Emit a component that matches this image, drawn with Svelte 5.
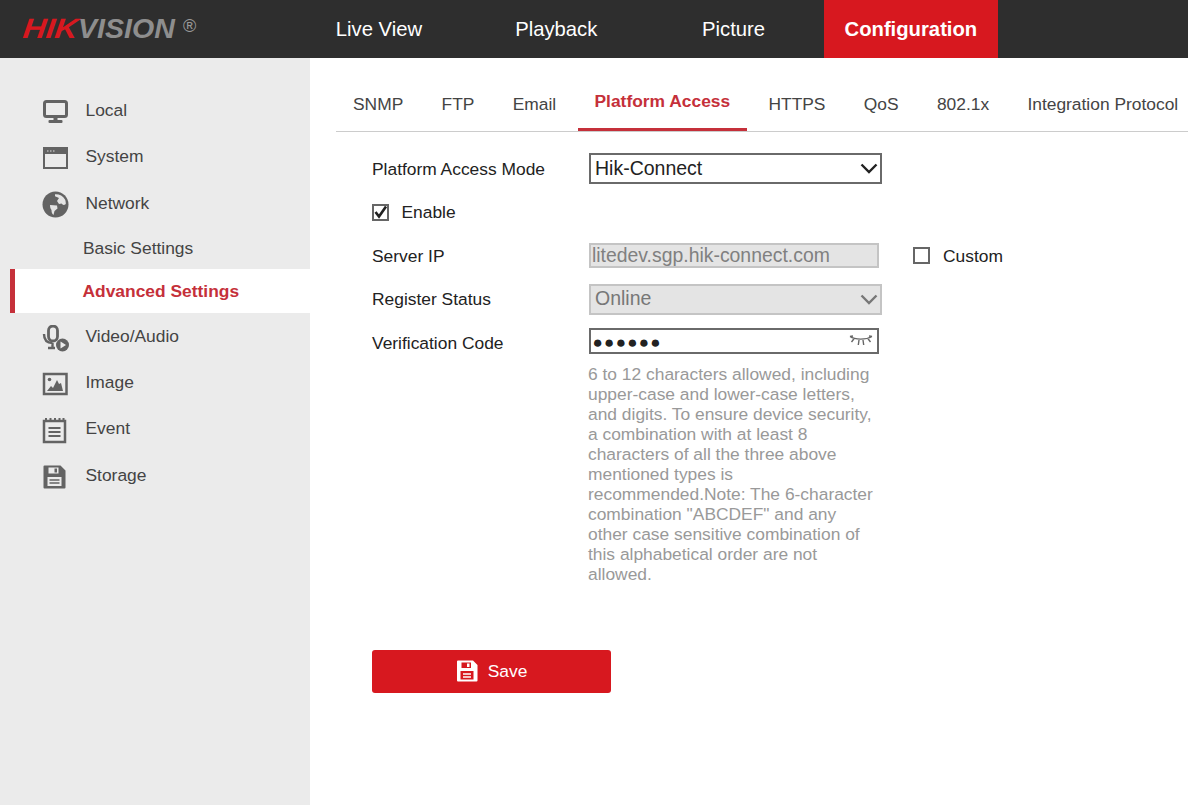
<script>
  const navItems = ['Live View', 'Playback', 'Picture', 'Configuration'];
  const tabs = ['SNMP', 'FTP', 'Email', 'Platform Access', 'HTTPS', 'QoS', '802.1x', 'Integration Protocol'];
</script>

<div class="page">
  <header class="topbar">
    <div class="logo">
      <span class="logo-word"><span class="hik">HIK</span><span class="vision">VISION</span></span>
      <span class="reg">®</span>
    </div>
    <nav class="mainnav">
      {#each navItems as item}
        <a href="#top" class="navitem" class:active={item === 'Configuration'}>{item}</a>
      {/each}
    </nav>
  </header>

  <div class="content">
    <aside class="sidebar">
      <div class="side-row">
        <svg class="icon" viewBox="0 0 27 27">
          <rect x="2.500" y="2.500" width="22" height="15" rx="2" fill="none" stroke="#636363" stroke-width="3"/>
          <rect x="11.500" y="18" width="4" height="4" fill="#636363"/>
          <rect x="6.500" y="21" width="14" height="3" rx="1" fill="#636363"/>
        </svg>
        <span>Local</span>
      </div>
      <div class="side-row">
        <svg class="icon" viewBox="0 0 27 27">
          <rect x="2" y="3" width="23" height="20" fill="none" stroke="#636363" stroke-width="2"/>
          <rect x="2" y="3" width="23" height="6" fill="#636363"/>
          <path d="M5 6h1.500M8 6h1.500M11 6h1.500" stroke="#ddd" stroke-width="1.200"/>
        </svg>
        <span>System</span>
      </div>
      <div class="side-row network">
        <svg class="icon" viewBox="0 0 27 27">
          <circle cx="13.500" cy="13.500" r="13" fill="#636363"/>
          <path d="M13 3.200c4-.3 8 1.500 10 5.300.7 1.500.8 2.800.8 4.500-2 1.500-3 1-4.300-.5l-2.500.5-2-3 2-3-4-1.800zM8 14l7 .5.5 3-3 2.500-1 4c-1.500-1-2-3-2-5-1-1-1.500-3-1.500-5z" fill="#e4e4e4"/>
        </svg>
        <span>Network</span>
      </div>
      <div class="side-row sub basic">Basic Settings</div>
      <div class="side-row sub current">Advanced Settings</div>
      <div class="side-row">
        <svg class="icon" viewBox="0 0 27 27">
          <rect x="6.500" y="1" width="9" height="15" rx="4.500" fill="none" stroke="#636363" stroke-width="2.800"/>
          <path d="M2 9c0 6 3 9 8.500 9M10.500 18v4M6 23h7" fill="none" stroke="#636363" stroke-width="2.400"/>
          <circle cx="20.500" cy="20" r="6.500" fill="#636363"/>
          <path d="M18.500 16.500l5.500 3.500-5.500 3.500z" fill="#ebebeb"/>
        </svg>
        <span>Video/Audio</span>
      </div>
      <div class="side-row">
        <svg class="icon" viewBox="0 0 27 27">
          <rect x="2" y="3" width="22.500" height="20" fill="#ebebeb" stroke="#636363" stroke-width="2.500"/>
          <circle cx="7.500" cy="8.500" r="1.800" fill="#636363"/>
          <path d="M5 20l4-5 2 2 4-8 2 4 2-1 2 8z" fill="#636363"/>
        </svg>
        <span>Image</span>
      </div>
      <div class="side-row">
        <svg class="icon" viewBox="0 0 27 27">
          <rect x="2" y="4" width="21" height="21" fill="none" stroke="#636363" stroke-width="2.500"/>
          <path d="M4 1v4M8.500 1v4M13 1v4M17.500 1v4M21.500 1v4" stroke="#636363" stroke-width="2"/>
          <path d="M6.500 11h12M6.500 15h12M6.500 19h12" stroke="#636363" stroke-width="1.800"/>
        </svg>
        <span>Event</span>
      </div>
      <div class="side-row">
        <svg class="icon" viewBox="0 0 27 27">
          <path d="M2.500 1.500h16l5 5v17a1 1 0 0 1-1 1h-20a1 1 0 0 1-1-1v-21a1 1 0 0 1 1-1z" fill="#636363"/>
          <rect x="6.500" y="3.500" width="10" height="6" fill="#ebebeb"/>
          <rect x="12.500" y="4.500" width="2.500" height="4" fill="#636363"/>
          <rect x="5.500" y="13" width="14" height="9" fill="#ebebeb"/>
          <path d="M7.500 16h10M7.500 19h10" stroke="#636363" stroke-width="1.500"/>
        </svg>
        <span>Storage</span>
      </div>
    </aside>

    <main class="main">
      <div class="tabs">
        {#each tabs as tab}
          <a href="#top" class="tab" class:selected={tab === 'Platform Access'}>{tab}</a>
        {/each}
      </div>

      <form class="form">
        <div class="row mode">
          <label for="mode">Platform Access Mode</label>
          <div class="selectbox">
            <select id="mode"><option>Hik-Connect</option></select>
            <svg class="chevron" viewBox="0 0 18 11"><path d="M1.500 1.500L9 9l7.500-7.500" fill="none" stroke="#222" stroke-width="2.400"/></svg>
          </div>
        </div>

        <div class="row enable">
          <span class="check on">
            <svg viewBox="0 0 17 17"><path d="M3.500 8l3.500 4.500L14 2.500" fill="none" stroke="#222" stroke-width="2.600"/></svg>
          </span>
          <span class="check-label">Enable</span>
        </div>

        <div class="row server">
          <label for="server">Server IP</label>
          <input id="server" class="field" value="litedev.sgp.hik-connect.com" disabled />
          <span class="check custom"></span>
          <span class="check-label raised">Custom</span>
        </div>

        <div class="row status">
          <label for="status">Register Status</label>
          <div class="selectbox off">
            <select id="status" disabled><option>Online</option></select>
            <svg class="chevron" viewBox="0 0 18 11"><path d="M1.500 1.500L9 9l7.500-7.500" fill="none" stroke="#777" stroke-width="2.400"/></svg>
          </div>
        </div>

        <div class="row code">
          <label for="code">Verification Code</label>
          <div class="codebox">
            <span class="dots" id="code">●●●●●●</span>
            <svg class="eye" viewBox="0 0 24 12">
              <path d="M1 1.500C6 5 17 5 23 1.500M5 3.800L2.500 7M10 5L9.300 10M14 5l.7 5M19 3.800L21.500 7M1 1.500L4 1M23 1.500L20 1" fill="none" stroke="#666" stroke-width="1.400"/>
            </svg>
          </div>
        </div>

        <p class="hint">6 to 12 characters allowed, including upper-case and lower-case letters, and digits. To ensure device security, a combination with at least 8 characters of all the three above mentioned types is recommended.Note: The 6-character combination "ABCDEF" and any other case sensitive combination of this alphabetical order are not allowed.</p>

        <button type="button" class="save">
          <svg class="save-icon" viewBox="0 0 22 22">
            <path d="M2 0.500h15l4.500 4.500v15.500a1 1 0 0 1-1 1H2a1 1 0 0 1-1-1V1.500a1 1 0 0 1 1-1z" fill="#fff"/>
            <rect x="5.500" y="2.500" width="9.500" height="5.500" fill="#d7181f"/>
            <rect x="11" y="3.500" width="2.500" height="3.500" fill="#fff"/>
            <rect x="4.500" y="11" width="13" height="8.500" fill="#d7181f"/>
            <path d="M7 14h8M7 17h8" stroke="#fff" stroke-width="1.400"/>
          </svg>
          <span>Save</span>
        </button>
      </form>
    </main>
  </div>
</div>

<style>
  :global(body) {
    margin: 0;
    background: #fff;
    font-family: "Liberation Sans", Arial, sans-serif;
  }

  .page {
    display: flex;
    flex-direction: column;
    height: 805px;
    overflow: hidden;
    font-size: 17.4px;
    color: #222;
  }

  .topbar {
    display: flex;
    flex: 0 0 58px;
    background: #2e2e2e;
  }

  .logo {
    flex: 0 0 292px;
    display: flex;
    align-items: flex-start;
    padding: 14px 0 0 23px;
    box-sizing: border-box;
  }

  .logo-word {
    display: flex;
    width: 157px;
    font-size: 28px;
    line-height: 30px;
    font-weight: bold;
    font-style: italic;
    white-space: nowrap;
  }

  .hik {
    flex: 0 0 55px;
    color: #d7181f;
    transform: scaleX(1.14) skewX(-6deg);
    transform-origin: left center;
  }

  .vision {
    color: #8e8e8e;
    transform: scaleX(1.02);
    transform-origin: left center;
  }

  .reg {
    color: #9a9a9a;
    font-size: 18px;
    line-height: 24px;
    margin-left: 3px;
  }

  .mainnav {
    display: flex;
    gap: 3.300px;
  }

  .navitem {
    width: 174px;
    line-height: 58px;
    text-align: center;
    color: #fff;
    font-size: 20.250px;
    text-decoration: none;
  }

  .navitem.active {
    background: #d7181f;
    font-weight: bold;
  }

  .content {
    flex: 1;
    display: flex;
    min-height: 0;
  }

  .sidebar {
    flex: 0 0 310px;
    box-sizing: border-box;
    background: #ebebeb;
    padding-top: 29px;
  }

  .side-row {
    display: flex;
    align-items: center;
    box-sizing: border-box;
    height: 46.300px;
    padding-left: 42px;
    color: #444;
  }

  .side-row.network {
    padding-top: 2px;
  }

  .icon {
    flex: 0 0 27px;
    width: 27px;
    height: 27px;
    margin: 4px 16.500px 0 0;
  }

  .side-row.network .icon {
    margin-top: 2px;
  }

  .side-row.basic {
    height: 43.100px;
    padding: 2px 0 0 83px;
  }

  .side-row.current {
    height: 44px;
    margin-left: 10px;
    padding: 2px 0 0 67.500px;
    background: #fff;
    border-left: 5px solid #c5303a;
    color: #c5303a;
    font-weight: bold;
  }

  .main {
    flex: 1;
    min-width: 0;
    padding: 0 0 0 26px;
  }

  .tabs {
    display: flex;
    gap: 4.300px;
    margin-top: 17px;
    height: 57px;
    box-sizing: border-box;
    border-bottom: 1px solid #ccc;
    white-space: nowrap;
  }

  .tab {
    padding: 0 17px;
    height: 56px;
    line-height: 58px;
    box-sizing: border-box;
    color: #444;
    text-decoration: none;
  }

  .tab.selected {
    color: #c5303a;
    font-weight: bold;
    line-height: 52px;
    border-bottom: 3px solid #c5303a;
  }

  .form {
    padding: 21px 0 0 36px;
  }

  .row {
    display: flex;
    align-items: center;
  }

  .row label {
    flex: 0 0 217px;
  }

  .mode { height: 31px; margin-bottom: 13px; }
  .mode label { padding-top: 1px; }
  .enable { height: 31px; margin-bottom: 15px; }
  .server { height: 25px; margin-bottom: 16px; }
  .server label { padding-top: 1px; }
  .status { height: 31px; margin-bottom: 13px; }
  .code { height: 26px; margin-bottom: 10px; }
  .code label { padding-top: 5px; }

  .selectbox {
    position: relative;
    width: 293px;
    height: 31px;
  }

  .selectbox select {
    appearance: none;
    width: 100%;
    height: 100%;
    box-sizing: border-box;
    border: 2px solid #6a6a6a;
    border-radius: 0;
    background: #fff;
    padding: 0 0 1px 4px;
    font: 19.500px "Liberation Sans", Arial, sans-serif;
    color: #222;
    opacity: 1;
  }

  .selectbox.off select {
    border-color: #c4c4c4;
    background: #e4e4e4;
    color: #777;
    padding-bottom: 3px;
  }

  .chevron {
    position: absolute;
    right: 4px;
    top: 10px;
    width: 18px;
    height: 11px;
    pointer-events: none;
  }

  .field {
    width: 290px;
    height: 25px;
    box-sizing: border-box;
    border: 2px solid #c4c4c4;
    border-radius: 0;
    background: #e4e4e4;
    padding: 0 0 0 1px;
    font: 19.400px "Liberation Sans", Arial, sans-serif;
    color: #808080;
    opacity: 1;
  }

  .check {
    flex: 0 0 17px;
    width: 17px;
    height: 17px;
    box-sizing: border-box;
    border: 2px solid #666;
    background: #fff;
    position: relative;
    display: block;
  }

  .check.on svg {
    position: absolute;
    left: -2px;
    top: -2px;
    width: 17px;
    height: 17px;
  }

  .check-label {
    margin-left: 12.500px;
    color: #222;
  }

  .check-label.raised {
    padding-top: 1px;
    margin-left: 13px;
  }

  .custom {
    margin-left: 34px;
  }

  .codebox {
    position: relative;
    display: flex;
    align-items: center;
    width: 290px;
    height: 26px;
    box-sizing: border-box;
    border: 2px solid #6a6a6a;
    background: #fff;
    padding-left: 1.500px;
  }

  .dots {
    font-size: 17px;
    letter-spacing: 1.300px;
    line-height: 22px;
    color: #222;
    padding-top: 3px;
  }

  .eye {
    position: absolute;
    right: 4px;
    top: 5px;
    width: 24px;
    height: 12px;
  }

  .hint {
    margin: 0 0 66px 216px;
    width: 288px;
    line-height: 20px;
    color: #999;
  }

  .save {
    display: flex;
    align-items: center;
    justify-content: center;
    gap: 10px;
    width: 239px;
    height: 43px;
    padding: 0 0 1px;
    border: 0;
    border-radius: 3px;
    background: #d7181f;
    color: #fff;
    font: 17.400px "Liberation Sans", Arial, sans-serif;
  }

  .save-icon {
    width: 22px;
    height: 22px;
  }
</style>
